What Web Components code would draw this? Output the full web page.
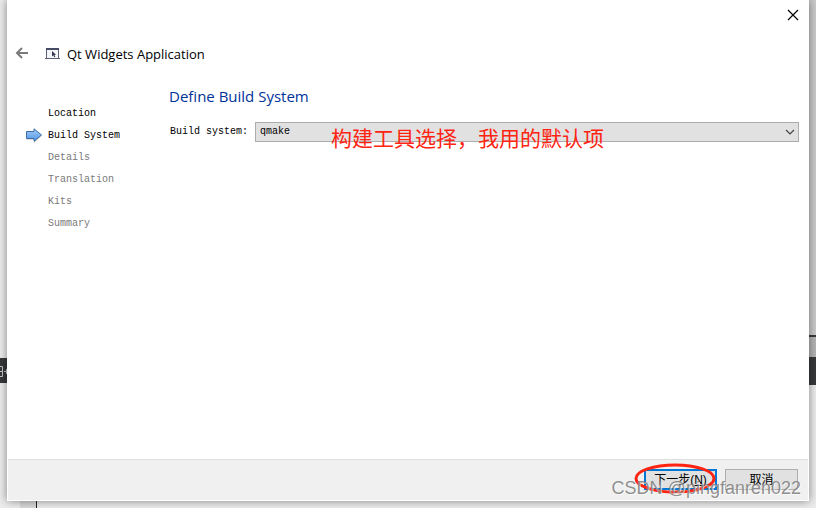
<!DOCTYPE html>
<html lang="zh-CN">
<head>
<meta charset="utf-8">
<title>Qt Widgets Application</title>
<style>
    body {
        margin: 0;
        min-height: 100vh;
        display: grid;
        overflow: hidden;
        background: #ececec;
        font: 10px/22px "Liberation Mono", "Noto Sans CJK SC", monospace;
        color: #000;
    }
    /* the wizard lies over the editor behind it */
    editor-backdrop, wizard-window {
        grid-area: 1 / 1;
    }
</style>
</head>
<body>
<editor-backdrop></editor-backdrop>
<wizard-window heading="Qt Widgets Application">
    <wizard-steps slot="steps">
        <wizard-step>Location</wizard-step>
        <wizard-step current>Build System</wizard-step>
        <wizard-step pending>Details</wizard-step>
        <wizard-step pending>Translation</wizard-step>
        <wizard-step pending>Kits</wizard-step>
        <wizard-step pending>Summary</wizard-step>
    </wizard-steps>
    <build-page></build-page>
    <wizard-button slot="actions" primary>下一步(<u>N</u>)</wizard-button>
    <wizard-button slot="actions">取消</wizard-button>
</wizard-window>

<script>
class BaseElement extends HTMLElement {
    constructor() {
        super();
        this.attachShadow({ mode: "open" });
    }
    getTemplate() {
        const template = document.createElement("template");
        template.innerHTML = this.getStyle() + this.getMarkup();
        return template;
    }
    render() {
        this.shadowRoot.replaceChildren(this.getTemplate().content.cloneNode(true));
    }
    connectedCallback() {
        this.render();
    }
}

// Edges of the editor that show around the dialog
class EditorBackdrop extends BaseElement {
    getStyle() {
        return /*html*/`
            <style>
                :host { display: grid; grid-template-columns: 37px 1fr 16px; }
                .left, .right { display: flex; flex-direction: column; }
                .gap { height: 358px; }
                .bar { height: 25px; background: #37383a; }
                .bar svg { display: block; }
                .low { flex: 1; }
                .left .low { border-right: 1px solid #222; background: linear-gradient(90deg, #ececec 20px, #d8d8d8 20px); }
                .top { height: 335px; background: #cbcbcb; }
                .strip { height: 20px; background: #b5b5b5; border: solid #3a3a3c; border-width: 2px 0; }
                .right .bar { height: 26px; }
            </style>
        `;
    }
    getMarkup() {
        return /*html*/`
            <div class="left">
                <div class="gap"></div>
                <div class="bar">
                    <svg width="12" height="25" fill="none" stroke="#c4c4c4"><path d="M0 8.500H2.500V18.500H0M0 13.500H2.500M4 13.500H9M6.500 11V16"/></svg>
                </div>
                <div class="low"></div>
            </div>
            <div></div>
            <div class="right">
                <div class="top"></div>
                <div class="strip"></div>
                <div class="bar"></div>
            </div>
        `;
    }
}

class WizardWindow extends BaseElement {
    getStyle() {
        return /*html*/`
            <style>
                :host {
                    display: flex;
                    flex-direction: column;
                    position: relative;
                    box-sizing: border-box;
                    margin: 0 7px 7px;
                    border: solid #fff;
                    border-width: 0 1px 1px;
                    background: #fff;
                    box-shadow: 0 0 9px rgba(0, 0, 0, .45);
                }
                .titlebar { display: flex; justify-content: flex-end; }
                button { padding: 0; border: 0; background: none; display: block; }
                svg { display: block; }
                .close { padding: 9px 9px 7px; }
                header { display: flex; align-items: center; height: 24px; margin-top: 14px; padding-left: 6px; }
                .back { padding: 0 1px 2px; margin-right: 15px; }
                h1 { margin: 0 0 0 6px; font: 13px/24px "Open Sans", "Noto Sans", sans-serif; }
                main { display: grid; grid-template-columns: 143px 1fr; gap: 18px; flex: 1; margin-top: 19px; padding-right: 9px; }
                footer {
                    display: flex;
                    justify-content: flex-end;
                    gap: 8px;
                    padding: 9px 10px 10px;
                    border-top: 1px solid #dfdfdf;
                    background: #f0f0f0;
                }
                .mark {
                    position: absolute;
                    right: 7px;
                    bottom: 0;
                    font: 18px/24px "Liberation Sans", Arial, sans-serif;
                    color: rgba(125, 125, 125, .85);
                    text-shadow: 1px 1px 0 rgba(255, 255, 255, .7);
                    pointer-events: none;
                }
            </style>
        `;
    }
    getMarkup() {
        return /*html*/`
            <div class="titlebar">
                <button class="close" aria-label="Close">
                    <svg width="12" height="12" fill="none" stroke="#000" stroke-width="1.200"><path d="M1 1L11 11M11 1L1 11"/></svg>
                </button>
            </div>
            <header>
                <button class="back" aria-label="Back">
                    <svg width="14" height="12" fill="none" stroke="#7b7b7b" stroke-width="2"><path d="M13 6H2M7 1L2 6L7 11"/></svg>
                </button>
                <svg width="16" height="12">
                    <path d="M1.500 1.500H13.500V10.500H1.500Z" fill="#f4f5f8" stroke="#5b6078"/>
                    <path d="M1 1H14" stroke="#454b62" stroke-width="2"/>
                    <path d="M0 10.500H15" stroke="#5b6078"/>
                    <path d="M7 3V8.500L8.300 7.300L9.300 9.300L10.300 8.800L9.400 7L11 6.800Z" fill="#303650"/>
                </svg>
                <h1>${this.getAttribute("heading")}</h1>
            </header>
            <main>
                <slot name="steps"></slot>
                <slot></slot>
            </main>
            <footer><slot name="actions"></slot></footer>
            <span class="mark">CSDN @pingfanren022</span>
        `;
    }
}

class WizardSteps extends BaseElement {
    getStyle() {
        return `<style>:host { display: block; padding: 18px 0 0 18px; }</style>`;
    }
    getMarkup() {
        return `<nav><slot></slot></nav>`;
    }
}

class WizardStep extends BaseElement {
    getStyle() {
        return /*html*/`
            <style>
                :host { display: grid; grid-template-columns: 16px 1fr; column-gap: 6px; align-items: center; height: 22px; }
                :host([pending]) { color: #7a7a7a; }
                span { grid-column: 2; }
                svg { display: none; grid-area: 1 / 1; }
                :host([current]) svg { display: block; }
            </style>
        `;
    }
    getMarkup() {
        return /*html*/`
            <svg width="16" height="16">
                <defs><linearGradient id="fill" x2="0" y2="1"><stop stop-color="#a5cdf8"/><stop offset="1" stop-color="#4f95e6"/></linearGradient></defs>
                <path d="M.5 4H8V1L15.500 7.500L8 15V11.500H.5Z" fill="#bbb"/>
                <path d="M.5 3.500H8V.8L15.500 7L8 13.200V10.500H.5Z" fill="url(#fill)" stroke="#3c6ea5"/>
            </svg>
            <span><slot></slot></span>
        `;
    }
}

class BuildPage extends BaseElement {
    getStyle() {
        return /*html*/`
            <style>
                :host { display: block; }
                h2 { margin: 0; font: 15px/22px "Open Sans", "Noto Sans", sans-serif; color: #003399; }
                .row { display: grid; grid-template-columns: 78px 1fr; gap: 7px; margin: 14px 0 0 1px; align-items: center; }
                .field { display: grid; position: relative; align-items: center; }
                select {
                    grid-area: 1 / 1;
                    appearance: none;
                    height: 20px;
                    margin: 0;
                    padding: 0 4px;
                    border: 1px solid #adadad;
                    border-radius: 0;
                    background: #e1e1e1;
                    color: #000;
                    font: inherit;
                    line-height: 18px;
                }
                svg { grid-area: 1 / 1; justify-self: end; margin-right: 4px; pointer-events: none; }
                /* red remark written over the field */
                .note {
                    position: absolute;
                    left: 76px;
                    top: 0;
                    font: 21px/30px "Noto Sans CJK SC", sans-serif;
                    color: #fe2412;
                    white-space: nowrap;
                    pointer-events: none;
                }
            </style>
        `;
    }
    getMarkup() {
        return /*html*/`
            <h2>Define Build System</h2>
            <div class="row">
                <label for="system">Build system:</label>
                <div class="field">
                    <select id="system"><option>qmake</option></select>
                    <svg width="10" height="6" fill="none" stroke="#444" stroke-width="1.200"><path d="M1 1L5 5L9 1"/></svg>
                    <span class="note">构建工具选择，我用的默认项</span>
                </div>
            </div>
        `;
    }
}

class WizardButton extends BaseElement {
    getStyle() {
        return /*html*/`
            <style>
                :host { display: block; position: relative; }
                button {
                    display: block;
                    width: 73px;
                    height: 21px;
                    padding: 2px 0 0;
                    border: 1px solid #adadad;
                    background: #e1e1e1;
                    color: #000;
                    font: 12px/17px "Liberation Sans", "Noto Sans CJK SC", sans-serif;
                }
                :host([primary]) button { border: 2px solid #0078d7; line-height: 15px; }
                svg { display: none; position: absolute; left: -10px; top: -6px; }
                :host([primary]) svg { display: block; }
            </style>
        `;
    }
    getMarkup() {
        return /*html*/`
            <button><slot></slot></button>
            <svg width="82" height="31" fill="none" stroke="#fe2412" stroke-width="3"><ellipse cx="41" cy="15.500" rx="39" ry="13.500"/></svg>
        `;
    }
}

customElements.define("editor-backdrop", EditorBackdrop);
customElements.define("wizard-window", WizardWindow);
customElements.define("wizard-steps", WizardSteps);
customElements.define("wizard-step", WizardStep);
customElements.define("build-page", BuildPage);
customElements.define("wizard-button", WizardButton);
</script>
</body>
</html>
